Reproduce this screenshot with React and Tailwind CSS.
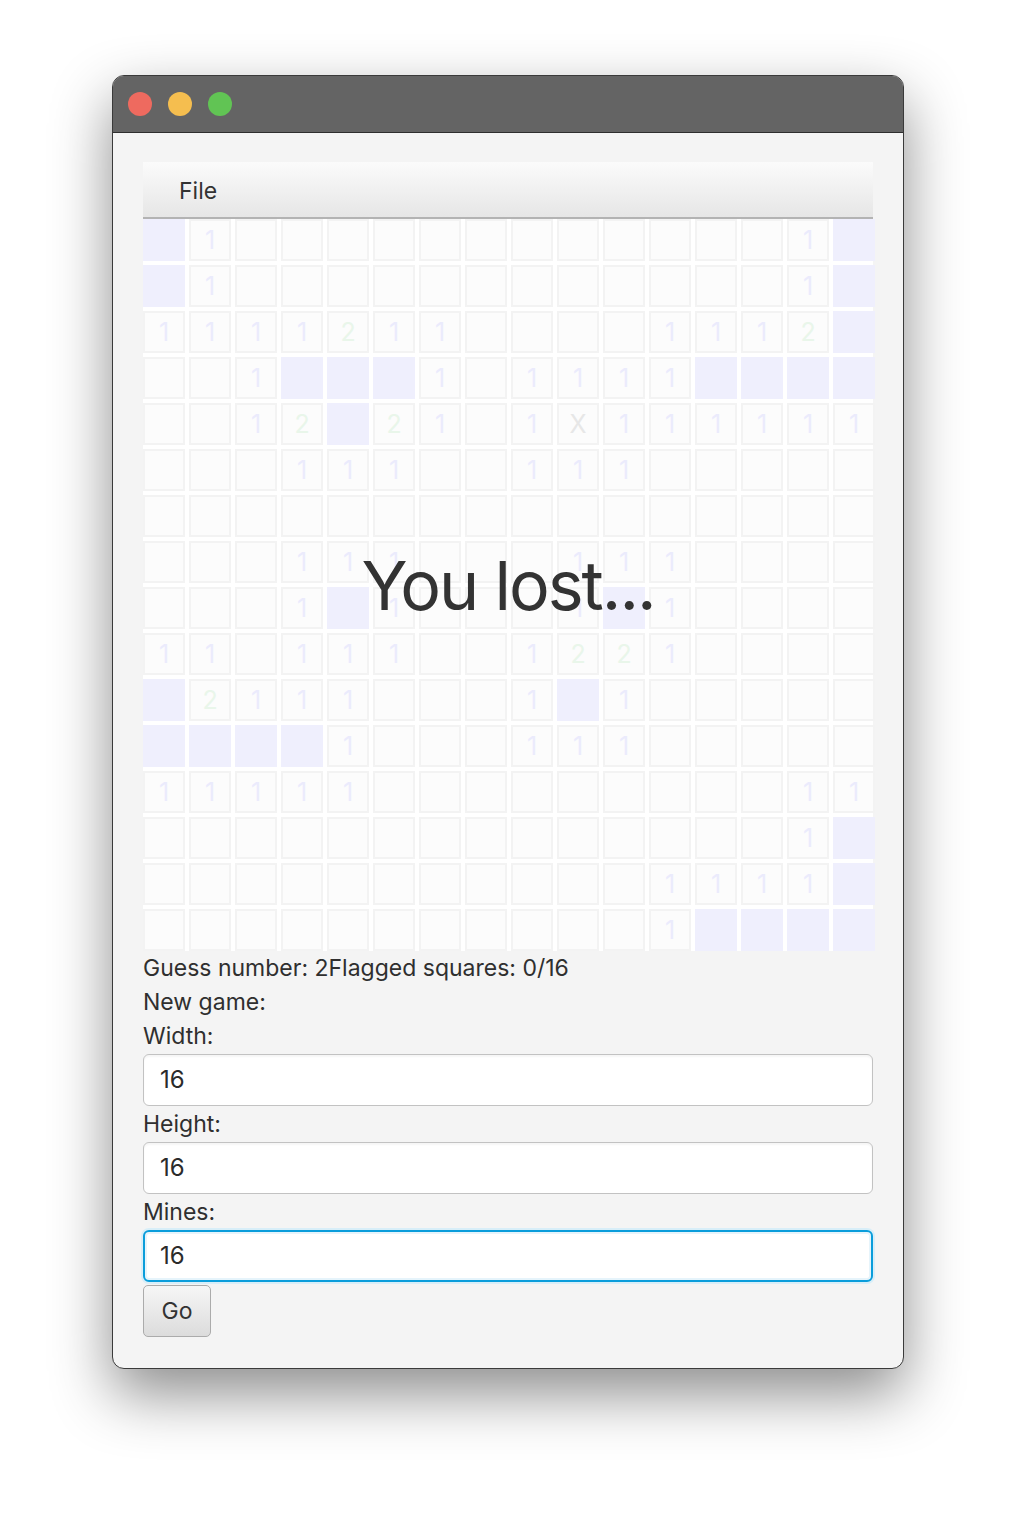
import React from "react";

const rows = [
  "#1............1#",
  "#1............1#",
  "1111211....1112#",
  "..1###1.1111####",
  "..12#21.1X111111",
  "...111..111.....",
  "................",
  "...111...111....",
  "...1#1...1#1....",
  "11.111..1221....",
  "#2111...1#1.....",
  "####1...111.....",
  "11111.........11",
  "..............1#",
  "...........1111#",
  "...........1####",
];

function Cell({ c }) {
  if (c === "#") {
    return <div className="w-[42px] h-[42px] bg-[#efeffd]" />;
  }
  let color = "text-[#ebebfc]";
  if (c === "2") color = "text-[#e9f6ea]";
  if (c === "X") color = "text-[#e7e7e7]";
  return (
    <div className="w-[42px] h-[42px] border-2 border-[#f3f3f3] bg-[#fcfcfc] flex items-center justify-center">
      <span className={`text-[25px] leading-none ${color}`}>{c === "." ? "" : c}</span>
    </div>
  );
}

function Field({ value, focused }) {
  return (
    <div
      className={
        focused
          ? "h-[52px] rounded-[6px] border-2 border-[#0a9ddb] bg-white shadow-[0_0_0_2px_#d8eef8,inset_0_0_0_2px_#e6f4fb] flex items-center px-[15px]"
          : "h-[52px] rounded-[6px] border border-[#c2c2c2] bg-white shadow-[inset_0_2px_2px_rgba(0,0,0,0.04)] flex items-center px-[16px]"
      }
    >
      <span className="text-[24px] text-[#2b2b2b]">{value}</span>
    </div>
  );
}

export default function App() {
  return (
    <div
      className="w-[1016px] h-[1516px] bg-white pt-[75px]"
      style={{ fontFamily: "Inter, 'Noto Sans', sans-serif" }}
    >
      <div className="mx-auto w-[792px] rounded-[12px] border border-[#3a3a3a] bg-[#f4f4f4] overflow-hidden shadow-[0_25px_60px_rgba(0,0,0,0.45)]">
        <div className="h-[57px] bg-[#646464] border-b border-[#2e2e2e] flex items-center gap-[16px] pl-[15px]">
          <div className="w-[24px] h-[24px] rounded-full bg-[#ee6a5f]" />
          <div className="w-[24px] h-[24px] rounded-full bg-[#f5be4f]" />
          <div className="w-[24px] h-[24px] rounded-full bg-[#61c454]" />
        </div>
        <div className="px-[30px] pt-[29px] pb-[31px]">
          <div className="h-[57px] bg-gradient-to-b from-[#fbfbfb] to-[#e6e6e6] border-b-2 border-[#b3b3b3] flex items-center pl-[36px] pt-[3px]">
            <span className="text-[23px] text-[#333]">File</span>
          </div>
          <div className="relative bg-white">
            <div className="grid grid-cols-[repeat(16,42px)] gap-[4px]">
              {rows.map((r, i) =>
                r.split("").map((c, j) => <Cell key={i + "-" + j} c={c} />)
              )}
            </div>
            <div className="absolute inset-0 flex items-center justify-center">
              <span className="text-[68px] text-[#333] tracking-[-2px]">You lost...</span>
            </div>
          </div>
          <div className="text-[23px] text-[#2f2f2f] leading-[34px]">
            <div>Guess number: 2Flagged squares: 0/16</div>
            <div>New game:</div>
            <div className="leading-[35px]">Width:</div>
            <Field value="16" />
            <div className="leading-[36px]">Height:</div>
            <Field value="16" />
            <div className="leading-[36px]">Mines:</div>
            <Field value="16" focused />
            <div className="mt-[3px] w-[68px] h-[52px] rounded-[5px] border border-[#ababab] bg-gradient-to-b from-[#f6f6f6] to-[#dcdcdc] flex items-center justify-center">
              <span className="text-[23px] text-[#333]">Go</span>
            </div>
          </div>
        </div>
      </div>
    </div>
  );
}
